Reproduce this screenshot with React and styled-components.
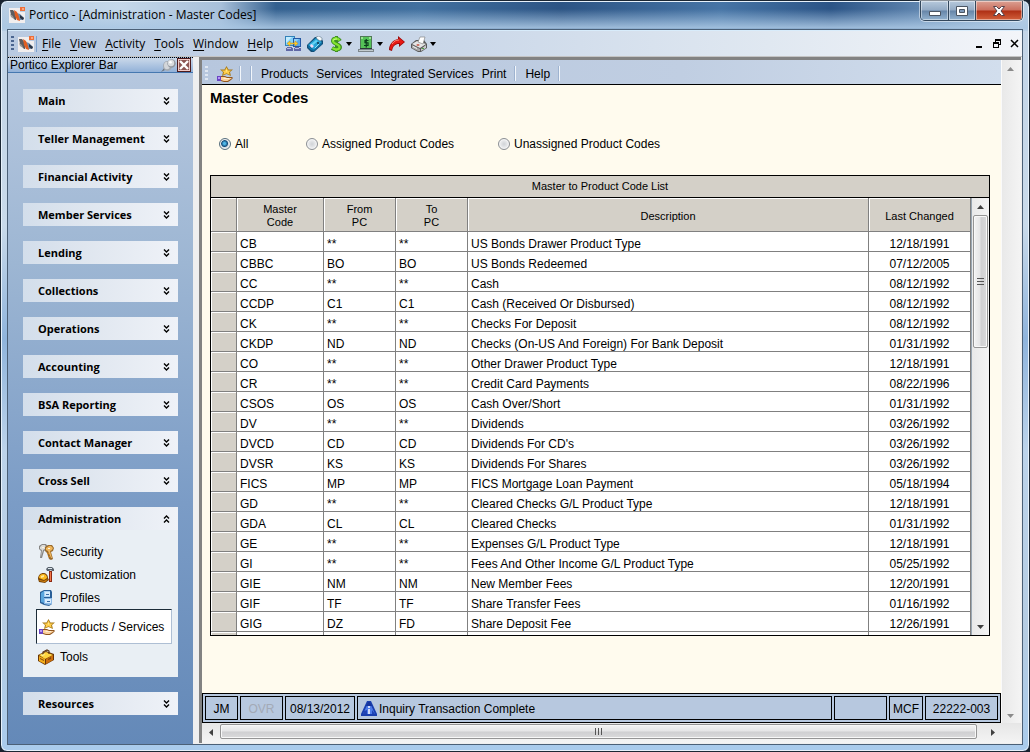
import React from 'react';
import styled, { createGlobalStyle, css } from 'styled-components';

const sans = '"Liberation Sans", Arial, sans-serif';
const ui = '"Open Sans", "Noto Sans", sans-serif';

const Global = createGlobalStyle`
  * { box-sizing: border-box; }
  html, body { margin: 0; background: #18222e; }
  body { font: 12px/16px ${sans}; color: #000; }
  button { font: inherit; color: inherit; background: none; border: 0; padding: 0; margin: 0; text-align: left; }
`;

/* ---------- window frame ---------- */

const Frame = styled.div`
  display: flex;
  flex-direction: column;
  min-height: 100vh;
  padding: 0 6px 6px;
  border: 1px solid #1b2734;
  border-radius: 7px;
  box-shadow: inset 0 0 0 1px #e6f1fb;
  background:
    linear-gradient(180deg, rgba(255, 255, 255, 0) 8px, rgba(170, 199, 227, 0.9) 27px, rgba(178, 205, 230, 0) 30px) 0 0 / 100% 30px no-repeat,
    linear-gradient(90deg, #b8cde2 0, #c5d8ea 120px, #a8c0da 220px, #33608f 275px, #41709f 420px, #2c5484 560px, #4674a5 720px, #2b5486 830px, #6b90b8 940px, #b9cfe4 1020px) 0 0 / 100% 30px no-repeat,
    linear-gradient(180deg, #c2d4e7, #c9daea 30%, #8fb4dc 45%, #bcd3ea 60%, #b5cce2 85%, #a9cbec);
`;

const TitleBar = styled.header`
  display: flex;
  height: 28px;
  align-items: flex-start;
  justify-content: space-between;
`;

const Title = styled.h1`
  display: flex;
  align-items: center;
  gap: 4px;
  margin: 0;
  padding: 5px 0 0 2px;
  font: 400 12px/18px ${ui};
`;

const Caption = styled.div`
  display: flex;
  border: 1px solid #33475c;
  border-top: 0;
  border-radius: 0 0 5px 5px;
  overflow: hidden;
  box-shadow: 0 0 0 1px rgba(255, 255, 255, 0.5);
`;

const CaptionButton = styled.button`
  display: flex;
  align-items: center;
  justify-content: center;
  width: ${p => (p.$danger ? 47 : 27)}px;
  height: 19px;
  border-left: ${p => (p.$first ? 0 : 1)}px solid #33475c;
  box-shadow: inset 0 0 0 1px rgba(255, 255, 255, 0.45);
  background: ${p => p.$danger
    ? 'linear-gradient(#dba093 0, #cb6f5e 48%, #ae2f14 52%, #d2603c 100%)'
    : 'linear-gradient(#b7c9dc 0, #93aac4 48%, #6685a8 52%, #93b2cf 100%)'};
`;

const Client = styled.div`
  display: flex;
  flex: 1;
  flex-direction: column;
  border: 1px solid #4b6077;
  background: #efefef;
`;

const MenuBar = styled.nav`
  display: flex;
  align-items: center;
  height: 27px;
  padding: 0 3px;
  border-top: 1px solid #d8ecfb;
  border-bottom: 1px solid #c4c4c4;
  font: 12px/18px ${ui};
  background: linear-gradient(90deg, #b9cae1, #cbd8e9 45%, #e0e8f1 75%, #f3f5f9);
`;

const Grip = styled.span`
  width: 3px;
  height: 15px;
  background: repeating-linear-gradient(180deg, ${p => p.$color} 0 2px, transparent 2px 4px);
`;

const MenuIcon = styled.span`
  display: flex;
  margin-left: 4px;
  padding-right: 2px;
  border-right: 1px solid #7ea3d0;
`;

const Menus = styled.div`
  display: flex;
  gap: 9px;
  margin-left: 5px;
`;

const MenuButton = styled.button`
  u { text-underline-offset: 2px; }
`;

const Tools = styled.div`
  display: flex;
  gap: 6px;
  margin-left: 12px;
`;

const ToolButton = styled.button`
  display: flex;
  align-items: center;
  gap: 3px;
`;

const MdiControls = styled.div`
  display: flex;
  gap: 8px;
  margin-left: auto;
`;

const MdiButton = styled.button`
  display: flex;
`;

const Body = styled.div`
  display: flex;
  flex: 1;
`;

/* ---------- explorer bar ---------- */

const Explorer = styled.aside`
  display: flex;
  flex: none;
  flex-direction: column;
  width: 185px;
  background: linear-gradient(180deg, #b8c9e0, #9db6d3 30%, #7b9cc6 65%, #6489b8);
`;

const ExplorerHead = styled.div`
  display: flex;
  align-items: center;
  height: 16px;
  padding-left: 2px;
  border-top: 1px dotted #000;
  border-bottom: 1px solid #4678b0;
  background: linear-gradient(180deg, #cbd9ea, #92b1d8);
`;

const ExplorerTitle = styled.h2`
  flex: 1;
  margin: 0;
  font: 400 12px/14px ${sans};
`;

const CloseBox = styled.button`
  display: flex;
  margin: 0 2px 0 1px;
`;

const Groups = styled.div`
  display: flex;
  flex-direction: column;
  gap: 15px;
  padding: 16px 15px 28px;
`;

const GroupHead = styled.button`
  display: flex;
  align-items: center;
  justify-content: space-between;
  width: 100%;
  height: 23px;
  padding: 0 8px 0 15px;
  font: 700 11px/16px ${ui};
  background: linear-gradient(90deg, #d3deeb, #dfe6ef 40%, #eff2f8);
`;

const GroupBody = styled.div`
  display: flex;
  flex-direction: column;
  padding: 10px 6px 9px 13px;
  background: #e9eff4;
`;

const GroupItem = styled.a`
  display: flex;
  align-items: center;
  gap: 6px;
  height: 23px;
  padding-left: 2px;
  color: #000;
  text-decoration: none;
  ${p => p.$active && css`
    height: 35px;
    margin-bottom: 1px;
    border: 1px solid #1c2c38;
    border-right-color: #aebfd4;
    border-bottom-color: #aebfd4;
    background: #fff;
  `}
`;

/* ---------- main pane ---------- */

const Pane = styled.main`
  display: flex;
  flex: 1;
  min-width: 0;
  flex-direction: column;
  margin: 0 1px 1px 6px;
  border-top: 3px solid #828282;
  border-left: 3px solid #828282;
  background: #efefef;
`;

const PaneRow = styled.div`
  display: flex;
  flex: 1;
`;

const PaneMain = styled.div`
  display: flex;
  flex: 1;
  min-width: 0;
  flex-direction: column;
  background: #fffbee;
`;

const Toolbar = styled.div`
  display: flex;
  align-items: center;
  height: 25px;
  padding: 3px 3px 0;
  border-bottom: 1px solid #000;
  background: linear-gradient(90deg, #b7c7de, #c0cee2 60%, #d2deed);
`;

const ToolbarIcon = styled.button`
  display: flex;
  margin: 0 6px 0 9px;
`;

const Divider = styled.span`
  width: 2px;
  height: 15px;
  margin-right: 9px;
  border-left: 1px solid #9eb3d0;
  border-right: 1px solid #f2f6fb;
`;

const ToolbarButton = styled.button`
  margin-right: 8px;
`;

const Content = styled.section`
  display: flex;
  flex: 1;
  flex-direction: column;
  padding: 3px 11px 40px 8px;
`;

const Heading = styled.h2`
  margin: 0;
  font: 700 15px/20px ${sans};
`;

const Filters = styled.fieldset`
  display: grid;
  grid-template-columns: 87px 192px auto;
  margin: 28px 0 19px;
  padding: 0 0 0 9px;
  border: 0;
  height: 20px;
`;

const Filter = styled.label`
  display: flex;
  align-items: center;
  gap: 4px;
`;

const Radio = styled.input`
  appearance: none;
  width: 12px;
  height: 12px;
  margin: 0;
  border: 1px solid #8b8f94;
  border-radius: 50%;
  background: radial-gradient(circle, #d0d3d7, #f1f2f3 70%);
  box-shadow: inset 0 0 0 1px #f4f4f4;
  &:checked {
    border-color: #58707f;
    background: radial-gradient(circle at 45% 45%, #4fb7e8 0 1px, #124c7c 3px, #d4dce2 4px);
  }
`;

const Grid = styled.div`
  border: 1px solid #000;
  background: #fff;
`;

const GridTitle = styled.div`
  height: 22px;
  border-bottom: 1px solid #000;
  font-size: 11px;
  line-height: 21px;
  text-align: center;
  background: #d4d0c8;
`;

const GridView = styled.div`
  display: flex;
`;

const Table = styled.table`
  flex: 1;
  width: 100%;
  table-layout: fixed;
  border-collapse: separate;
  border-spacing: 0;
`;

const Col = styled.col`
  width: ${p => (p.$w ? `${p.$w}px` : 'auto')};
`;

const Th = styled.th`
  height: 34px;
  padding: 3px 0 0;
  border-right: 1px solid #808080;
  border-bottom: 1px solid #808080;
  box-shadow: inset 1px 1px 0 #fff;
  font: 400 11px/13px ${sans};
  background: #d4d0c8;
`;

const Td = styled.td`
  height: ${p => (p.$tail ? 3 : 20)}px;
  padding: ${p => (p.$tail ? '0' : '5px 3px 0')};
  border-right: 1px solid #808080;
  border-bottom: ${p => (p.$tail ? 0 : 1)}px solid #808080;
  line-height: 14px;
  text-align: ${p => (p.$center ? 'center' : 'left')};
  white-space: nowrap;
  ${p => p.$head && css`
    box-shadow: inset 1px 1px 0 #fff;
    background: #d4d0c8;
  `}
`;

/* ---------- scroll bars ---------- */

const VTrack = styled.div`
  display: flex;
  flex: none;
  flex-direction: column;
  align-items: center;
  justify-content: ${p => (p.$spread ? 'space-between' : 'flex-start')};
  width: ${p => p.$w}px;
  padding: ${p => (p.$spread ? '7px 3px 5px 0' : '0 1px')};
  border-left: 1px solid ${p => (p.$spread ? '#fafafa' : '#9aa7b3')};
  background: linear-gradient(90deg, #e9e9e9, #f4f4f4);
`;

const ScrollButton = styled.button`
  display: flex;
  align-items: center;
  justify-content: center;
  width: 17px;
  height: 17px;
`;

const VThumb = styled.div`
  display: flex;
  align-items: center;
  justify-content: center;
  width: 15px;
  height: 133px;
  margin-bottom: auto;
  border: 1px solid #959595;
  border-radius: 2px;
  box-shadow: inset 0 0 0 1px #f8f8f8;
  background: linear-gradient(90deg, #f3f3f3, #e5e5e6 48%, #cfcfd1 52%, #dadadb);
`;

const HTrack = styled.div`
  display: flex;
  align-items: flex-start;
  height: 20px;
  padding: 1px 20px 0 0;
  background: linear-gradient(180deg, #e6e6e6, #f4f4f4);
`;

const HThumb = styled.div`
  display: flex;
  flex: 1;
  align-items: center;
  justify-content: center;
  height: 15px;
  margin: 0 7px 0 1px;
  border: 1px solid #959595;
  border-radius: 2px;
  box-shadow: inset 0 0 0 1px #f8f8f8;
  background: linear-gradient(180deg, #f3f3f3, #e5e5e6 48%, #cfcfd1 52%, #dadadb);
`;

/* ---------- status bar ---------- */

const StatusBar = styled.footer`
  display: flex;
  gap: 2px;
  height: 30px;
  padding: 2px;
  border: 1px solid #000;
  background: #b7c8df;
`;

const StatusCell = styled.div`
  display: flex;
  flex: ${p => (p.$w ? 'none' : 1)};
  align-items: center;
  justify-content: ${p => (p.$w ? 'center' : 'flex-start')};
  gap: 2px;
  width: ${p => (p.$w ? `${p.$w}px` : 'auto')};
  padding: 2px 3px 0;
  border: 1px solid #000;
  white-space: nowrap;
  color: ${p => (p.$off ? '#a3aab6' : '#000')};
`;

/* ---------- icons ---------- */

const Svg = ({ w = 16, h = 16, children }) => (
  <svg width={w} height={h} viewBox={`0 0 ${w} ${h}`} aria-hidden="true">{children}</svg>
);

const LogoIcon = () => (
  <Svg>
    <path d="M0 1h11v4h5v11H0z" fill="#f1eeee" />
    <path d="M1 3h3l3 4v6H6L2 8z" fill="#5d5c60" />
    <path d="M1 7l3 2 1 3-3-2z" fill="#9a9694" />
    <path d="M8 6l3 1 4 4-1 2H9z" fill="#6f8bab" />
    <path d="M11 8l4 3-1 2-3-2z" fill="#2a3342" />
    <path d="M5 3l3 2 2 5 1 4-3-1-2-4z" fill="#e35d20" />
    <path d="M11 0h5v4h-5z" fill="#ee6f38" />
    <path d="M13 1h2v2h-2z" fill="#ffa57c" />
  </Svg>
);

const NetworkIcon = () => (
  <Svg>
    <path d="M0 0h10v10H0z" fill="#3382b8" />
    <path d="M1 1h8v8H1z" fill="#82d2fa" />
    <path d="M1 1h6L1 7z" fill="#c3edff" />
    <path d="M8 2h8v9H8z" fill="#2458a4" />
    <path d="M9 3h6v7H9z" fill="#5aa9ea" />
    <path d="M9 3h5L9 8z" fill="#8fd2f8" />
    <path d="M2 11h5v1h1v3H1v-3h1zM10 11h4v1h2v3H9v-3h1z" fill="#5f68a5" />
    <path d="M2 12h4v1H2zM10 12h4v1h-4z" fill="#b4bae2" />
    <path d="M2 7.500L5 5v2h5V5l3 2.500-3 2.500V8H5v2z" fill="#ffcf2b" stroke="#c98d10" strokeWidth=".5" />
  </Svg>
);

const CardIcon = () => (
  <Svg>
    <path d="M0 9l8-8h5l3 4v3l-9 8H4l-4-4z" fill="#124e76" />
    <path d="M1 9l8-7 6 4-8 8z" fill="#26a2d5" />
    <path d="M1 10l6 4 8-7v1l-8 7-3-1-3-3z" fill="#0b79b4" />
    <path d="M3 9l6-5 2 1-6 5z" fill="#65d3f4" />
    <path d="M4 8l3 2-2 2-2-2z" fill="#f2d9f7" />
    <path d="M9 1l3-1 3 2v2l-2 1-3-2z" fill="#f3f8fa" stroke="#486579" strokeWidth=".5" />
    <path d="M10 6h2v2h-2z" fill="#174e6f" />
    <path d="M12 8l-4 4" stroke="#8ee2f8" />
  </Svg>
);

const DollarIcon = () => (
  <Svg w={14}>
    <path d="M11 5C9 2 4 2 4 5s7 3 7 6-5 3-8 1" fill="none" stroke="#3f8f24" strokeWidth="4" />
    <path d="M7.500 0v16" stroke="#3f8f24" strokeWidth="3" />
    <path d="M10.500 4.500C9 2 4 2 4 5s6.500 3 6.500 6-4.500 3-7 1" fill="none" stroke="#86e62e" strokeWidth="2.200" />
    <path d="M7 1v2M7 13v2" stroke="#86e62e" strokeWidth="1.500" />
    <path d="M4 4.500C5 3 7 3 8 3" fill="none" stroke="#ccff90" />
  </Svg>
);

const CashIcon = () => (
  <Svg>
    <path d="M2 0h12v13H2z" fill="#4f7a55" />
    <path d="M3 1h10v12H3z" fill="#55c257" />
    <path d="M3 1h2v2H3zM11 1h2v2h-2z" fill="#9be491" />
    <path d="M10.500 4.500H7v2.250h3V9.500H6M8.250 3v8.500" fill="none" stroke="#0c3f1c" strokeWidth="1.200" />
    <path d="M0 13h2v-1h12v1h2v3H0z" fill="#7d868b" />
    <path d="M1 14h14v1H1z" fill="#c3ccd0" />
    <path d="M2 12h12v1H2z" fill="#2b3a36" />
  </Svg>
);

const ArrowIcon = () => (
  <Svg>
    <path d="M9 0l7 6-6 5V8C6 8 4 10 3 15L0 14C0 8 4 4 9 3z" fill="#9d0b0b" />
    <path d="M10 2l5 4-4 3V7C6 7 4 9 2.500 14L1 13C1 8 5 4 10 4z" fill="#e81914" />
    <path d="M3 8c2-3 4-4 7-4" fill="none" stroke="#ff8a7c" />
  </Svg>
);

const PrinterIcon = () => (
  <Svg>
    <path d="M0 8l5-4h8l3 4v4l-6 4H7l-7-4z" fill="#5a5a5a" />
    <path d="M1 8l5-3 9 3-6 4z" fill="#e6e6e6" />
    <path d="M1 9l8 4v2H7l-6-3z" fill="#a9a9a9" />
    <path d="M10 13l5-4v3l-5 3z" fill="#cdcdcd" />
    <path d="M7 6l2-5h5l-2 7z" fill="#fff" stroke="#777" strokeWidth=".6" />
    <path d="M5 9l2-1 2 1-2 1z" fill="#c2513f" />
    <path d="M11 12h2v1h-2z" fill="#48a642" />
    <path d="M2 10l4 2v1l-4-2z" fill="#f4f4f4" />
  </Svg>
);

const StarHandIcon = () => (
  <Svg>
    <path d="M9.500 0l2 3.500H16L13 6l1 4-4.500-2L5 10l1-4-3-2.500h4.500z" fill="#a87a1c" />
    <path d="M9.500 1.500L11 4.500h3L12 6.300l.7 2.500-3.200-1.500-3.200 1.500L7 6.300 5 4.500h3z" fill="#ffce4b" />
    <path d="M9.500 3l.7 2.500H8.800z" fill="#fff0a0" />
    <path d="M0 10h4v5H0z" fill="#6a45c4" />
    <path d="M1 11h2v2H1z" fill="#b797f4" />
    <path d="M4 10h4l2 1h5l1 1-2 2-3 2H7l-3-1z" fill="#8f551d" />
    <path d="M4 11h4l2 1h5l-2 1.500-2.500 1.500H7l-3-1z" fill="#fbd09a" />
    <path d="M6 12h6v1H7z" fill="#ffedd2" />
  </Svg>
);

const KeysIcon = () => (
  <Svg>
    <path d="M1 2l3-2h4l2 3-2 3-2 1-2 7H2l1-7-2-2z" fill="#868583" />
    <path d="M2 3l2-2h3l1 2-1 2-2 1-2 7 1-7-2-1z" fill="#dddcd8" />
    <path d="M7 3l3-2h4l2 3-1 3-2 1 2 7-2 1-2-1-2-6-2-2z" fill="#9a6a2a" />
    <path d="M8 4l3-2h2l2 2-1 2-2 1 2 7h-1l-3-7-2-1z" fill="#f0b75c" />
    <path d="M10 4h2v1h-2zM4 3h2v1H4z" fill="#fff6dc" />
    <path d="M9 9h2v1H9zM10 12h2v1h-2z" fill="#c88226" />
  </Svg>
);

const HelmetIcon = () => (
  <Svg>
    <path d="M0 12c0-4 3-6 5-6 3 0 5 2 5 5l1 2-4 3-6-1z" fill="#7a4608" />
    <path d="M1 11c0-3 2-4 4-4 3 0 4 2 4 4l-3 2z" fill="#fcb91c" />
    <path d="M3 9l3-1v2l-3 1z" fill="#ffe694" />
    <path d="M1 13l5 1 4-2-3 3-5-1z" fill="#e58b0c" />
    <path d="M8 2l2-2h4l2 2v2h-2l-1-1-2 1H9z" fill="#59636d" />
    <path d="M10 1h4v1h-4z" fill="#dfe8ed" />
    <path d="M11 4h3v11h-3z" fill="#8d2811" />
    <path d="M12 5h1v9h-1z" fill="#f5794a" />
  </Svg>
);

const CabinetIcon = () => (
  <Svg>
    <path d="M2 2l4-2h7l1 2v12l-3 2-5-1-4-2z" fill="#2a5f97" />
    <path d="M3 3l3-2v12l-3-1z" fill="#5aa6de" />
    <path d="M6 1h6v6H6z" fill="#a9d0f3" />
    <path d="M6 8h8v6l-3 1-5-1z" fill="#8dbbe8" />
    <path d="M7 2h5v4H7zM7 9h6v4H7z" fill="#d8ecfc" />
    <path d="M8 4h3v1H8zM9 11h3v1H9z" fill="#3b6aa4" />
  </Svg>
);

const ToolboxIcon = () => (
  <Svg>
    <path d="M0 6l8-4 8 3v6l-9 5-7-4z" fill="#6a3706" />
    <path d="M1 6l7-3 7 3-8 4z" fill="#ffd540" />
    <path d="M1 7l6 3v5l-6-3z" fill="#f5ae1a" />
    <path d="M8 10l7-4v5l-7 4z" fill="#cc6f0c" />
    <path d="M5 6V3l4-2 2 1v3" fill="none" stroke="#573010" strokeWidth="1.200" />
    <path d="M2 9l4 2v1l-4-2zM10 10l3-2v2l-3 1z" fill="#7f470f" />
    <path d="M3 6l3-1 1 1-3 1z" fill="#fff3a0" />
  </Svg>
);

const InfoIcon = () => (
  <Svg>
    <path d="M6 0h4l6 13v2H0v-2z" fill="#1a3faf" />
    <path d="M7 2h2l5 11H2z" fill="#4e7ce8" />
    <path d="M7 1h2l2 4H5z" fill="#17349b" />
    <path d="M3 10l3-1v4H2zM11 9l3 4h-3z" fill="#2144b5" />
    <path d="M7 5h2v2H7zM7 8h2v5H7z" fill="#cfdafa" />
  </Svg>
);

const PinIcon = () => (
  <Svg w={15} h={13}>
    <path d="M0 13l4-5 2 2z" fill="#6b727b" />
    <ellipse cx="6.500" cy="7" rx="4.500" ry="5" fill="#a4aab1" />
    <ellipse cx="6" cy="6.500" rx="3" ry="3.800" fill="#d3d6da" />
    <circle cx="10.500" cy="4.500" r="4.200" fill="#9298a0" />
    <circle cx="10" cy="4" r="3.200" fill="#d9dcdf" />
    <circle cx="9.500" cy="3.200" r="1.300" fill="#fff" />
  </Svg>
);

const CloseBoxIcon = () => (
  <Svg w={14} h={14}>
    <path d="M0 0h14v14H0z" fill="#4b1a1c" />
    <path d="M1 1h12v12H1z" fill="#f0c9c6" />
    <path d="M2 2h10v10H2z" fill="#8c5553" />
    <path d="M3 3l8 8M11 3l-8 8" stroke="#fff" strokeWidth="2.400" />
  </Svg>
);

const Chevrons = ({ up }) => (
  <Svg w={7} h={8}>
    <path
      d={up ? 'M1 3.500L3.500 1 6 3.500M1 7.500L3.500 5 6 7.500' : 'M1 .5L3.500 3 6 .5M1 4.500L3.500 7 6 4.500'}
      fill="none" stroke="#000" strokeWidth="1.400"
    />
  </Svg>
);

const arrows = {
  down: [7, 4, 'M0 0h7L3.500 4z'],
  up: [7, 4, 'M0 4h7L3.500 0z'],
  left: [4, 7, 'M4 0v7L0 3.500z'],
  right: [4, 7, 'M0 0v7l4-3.500z'],
};

const Arrow = ({ dir, color = '#404040' }) => {
  const [w, h, d] = arrows[dir];
  return <Svg w={w} h={h}><path d={d} fill={color} /></Svg>;
};

const Caret = () => <Svg w={6} h={4}><path d="M0 0h6L3 4z" fill="#000" /></Svg>;

const ThumbLines = ({ vertical }) => (
  <Svg w={9} h={9}>
    <path d={vertical ? 'M1.500 1v7M4.500 1v7M7.500 1v7' : 'M1 1.500h7M1 4.500h7M1 7.500h7'} stroke="#555" />
  </Svg>
);

/* ---------- data ---------- */

const groupsBefore = ['Main', 'Teller Management', 'Financial Activity', 'Member Services', 'Lending',
  'Collections', 'Operations', 'Accounting', 'BSA Reporting', 'Contact Manager', 'Cross Sell'];

const adminItems = [
  ['Security', KeysIcon],
  ['Customization', HelmetIcon],
  ['Profiles', CabinetIcon],
  ['Products / Services', StarHandIcon, true],
  ['Tools', ToolboxIcon],
];

const menus = ['File', 'View', 'Activity', 'Tools', 'Window', 'Help'];

const tools = [
  ['Connection', NetworkIcon],
  ['Card', CardIcon],
  ['Money', DollarIcon, true],
  ['Cash', CashIcon, true],
  ['Forward', ArrowIcon],
  ['Printer', PrinterIcon, true],
];

const rows = [
  ['CB', '**', '**', 'US Bonds Drawer Product Type', '12/18/1991'],
  ['CBBC', 'BO', 'BO', 'US Bonds Redeemed', '07/12/2005'],
  ['CC', '**', '**', 'Cash', '08/12/1992'],
  ['CCDP', 'C1', 'C1', 'Cash (Received Or Disbursed)', '08/12/1992'],
  ['CK', '**', '**', 'Checks For Deposit', '08/12/1992'],
  ['CKDP', 'ND', 'ND', 'Checks (On-US And Foreign) For Bank Deposit', '01/31/1992'],
  ['CO', '**', '**', 'Other Drawer Product Type', '12/18/1991'],
  ['CR', '**', '**', 'Credit Card Payments', '08/22/1996'],
  ['CSOS', 'OS', 'OS', 'Cash Over/Short', '01/31/1992'],
  ['DV', '**', '**', 'Dividends', '03/26/1992'],
  ['DVCD', 'CD', 'CD', "Dividends For CD's", '03/26/1992'],
  ['DVSR', 'KS', 'KS', 'Dividends For Shares', '03/26/1992'],
  ['FICS', 'MP', 'MP', 'FICS Mortgage Loan Payment', '05/18/1994'],
  ['GD', '**', '**', 'Cleared Checks G/L Product Type', '12/18/1991'],
  ['GDA', 'CL', 'CL', 'Cleared Checks', '01/31/1992'],
  ['GE', '**', '**', 'Expenses G/L Product Type', '12/18/1991'],
  ['GI', '**', '**', 'Fees And Other Income G/L Product Type', '05/25/1992'],
  ['GIE', 'NM', 'NM', 'New Member Fees', '12/20/1991'],
  ['GIF', 'TF', 'TF', 'Share Transfer Fees', '01/16/1992'],
  ['GIG', 'DZ', 'FD', 'Share Deposit Fee', '12/26/1991'],
];

/* ---------- page ---------- */

const Group = ({ name, open, children }) => (
  <div>
    <GroupHead aria-expanded={!!open}>{name}<Chevrons up={open} /></GroupHead>
    {children}
  </div>
);

export default function App() {
  return (
    <>
      <Global />
      <Frame>
        <TitleBar>
          <Title><LogoIcon />Portico - [Administration - Master Codes]</Title>
          <Caption>
            <CaptionButton $first aria-label="Minimize">
              <Svg w={12} h={12}><path d="M.5 6.500h11v4H.5z" fill="#fff" stroke="#4b5563" /></Svg>
            </CaptionButton>
            <CaptionButton aria-label="Maximize">
              <Svg w={12} h={10}>
                <path d="M.5.5h11v9H.5z" fill="#fff" stroke="#4b5563" />
                <path d="M3.500 3.500h5v3h-5z" fill="#7e9abb" stroke="#4b5563" />
              </Svg>
            </CaptionButton>
            <CaptionButton $danger aria-label="Close">
              <Svg w={12} h={10}>
                <path d="M.5.5h3L6 3l2.500-2.500h3L8 5l3.500 4.500h-3L6 7 3.500 9.500h-3L4 5z" fill="#fff" stroke="#53404a" />
              </Svg>
            </CaptionButton>
          </Caption>
        </TitleBar>
        <Client>
          <MenuBar>
            <Grip $color="#4a6590" />
            <MenuIcon><LogoIcon /></MenuIcon>
            <Menus>
              {menus.map(m => <MenuButton key={m}><u>{m[0]}</u>{m.slice(1)}</MenuButton>)}
            </Menus>
            <Tools>
              {tools.map(([name, Icon, drop]) => (
                <ToolButton key={name} aria-label={name}><Icon />{drop && <Caret />}</ToolButton>
              ))}
            </Tools>
            <MdiControls>
              <MdiButton aria-label="Minimize document">
                <Svg w={9} h={9}><path d="M1 7h6v2H1z" /></Svg>
              </MdiButton>
              <MdiButton aria-label="Restore document">
                <Svg w={10} h={9}>
                  <path d="M3 0h6v6H7V5h1V2H4v1H3z" />
                  <path d="M1 3h6v6H1zM2 5v3h4V5z" fillRule="evenodd" />
                </Svg>
              </MdiButton>
              <MdiButton aria-label="Close document">
                <Svg w={9} h={9}><path d="M1 1l7 7M8 1L1 8" stroke="#000" strokeWidth="1.500" /></Svg>
              </MdiButton>
            </MdiControls>
          </MenuBar>
          <Body>
            <Explorer>
              <ExplorerHead>
                <ExplorerTitle>Portico Explorer Bar</ExplorerTitle>
                <PinIcon />
                <CloseBox aria-label="Close explorer bar"><CloseBoxIcon /></CloseBox>
              </ExplorerHead>
              <Groups>
                {groupsBefore.map(g => <Group key={g} name={g} />)}
                <Group name="Administration" open>
                  <GroupBody>
                    {adminItems.map(([name, Icon, active]) => (
                      <GroupItem key={name} href="#" $active={active}><Icon />{name}</GroupItem>
                    ))}
                  </GroupBody>
                </Group>
                <Group name="Resources" />
              </Groups>
            </Explorer>
            <Pane>
              <PaneRow>
                <PaneMain>
                  <Toolbar>
                    <Grip $color="#dfe7f2" />
                    <ToolbarIcon aria-label="Products and services"><StarHandIcon /></ToolbarIcon>
                    <Divider />
                    <Divider />
                    <ToolbarButton>Products</ToolbarButton>
                    <ToolbarButton>Services</ToolbarButton>
                    <ToolbarButton>Integrated Services</ToolbarButton>
                    <ToolbarButton>Print</ToolbarButton>
                    <Divider />
                    <ToolbarButton>Help</ToolbarButton>
                    <Divider />
                  </Toolbar>
                  <Content>
                    <Heading>Master Codes</Heading>
                    <Filters>
                      <Filter><Radio type="radio" name="codes" defaultChecked />All</Filter>
                      <Filter><Radio type="radio" name="codes" />Assigned Product Codes</Filter>
                      <Filter><Radio type="radio" name="codes" />Unassigned Product Codes</Filter>
                    </Filters>
                    <Grid>
                      <GridTitle>Master to Product Code List</GridTitle>
                      <GridView>
                        <Table>
                          <colgroup>
                            <Col $w={26} /><Col $w={87} /><Col $w={72} /><Col $w={72} /><Col /><Col $w={102} />
                          </colgroup>
                          <thead>
                            <tr>
                              <Th />
                              <Th>Master<br />Code</Th>
                              <Th>From<br />PC</Th>
                              <Th>To<br />PC</Th>
                              <Th>Description</Th>
                              <Th>Last Changed</Th>
                            </tr>
                          </thead>
                          <tbody>
                            {rows.map(([code, from, to, text, date]) => (
                              <tr key={code}>
                                <Td $head />
                                <Td>{code}</Td>
                                <Td>{from}</Td>
                                <Td>{to}</Td>
                                <Td>{text}</Td>
                                <Td $center>{date}</Td>
                              </tr>
                            ))}
                            <tr>
                              <Td $tail $head /><Td $tail /><Td $tail /><Td $tail /><Td $tail /><Td $tail />
                            </tr>
                          </tbody>
                        </Table>
                        <VTrack $w={18}>
                          <ScrollButton aria-label="Scroll list up"><Arrow dir="up" /></ScrollButton>
                          <VThumb><ThumbLines /></VThumb>
                          <ScrollButton aria-label="Scroll list down"><Arrow dir="down" /></ScrollButton>
                        </VTrack>
                      </GridView>
                    </Grid>
                  </Content>
                  <StatusBar>
                    <StatusCell $w={33}>JM</StatusCell>
                    <StatusCell $w={43} $off>OVR</StatusCell>
                    <StatusCell $w={70}>08/13/2012</StatusCell>
                    <StatusCell><InfoIcon />Inquiry Transaction Complete</StatusCell>
                    <StatusCell $w={53} />
                    <StatusCell $w={34}>MCF</StatusCell>
                    <StatusCell $w={73}>22222-003</StatusCell>
                  </StatusBar>
                </PaneMain>
                <VTrack $w={20} $spread>
                  <Arrow dir="up" color="#8a8a8a" />
                  <Arrow dir="down" color="#8a8a8a" />
                </VTrack>
              </PaneRow>
              <HTrack>
                <ScrollButton aria-label="Scroll left"><Arrow dir="left" /></ScrollButton>
                <HThumb><ThumbLines vertical /></HThumb>
                <ScrollButton aria-label="Scroll right"><Arrow dir="right" /></ScrollButton>
              </HTrack>
            </Pane>
          </Body>
        </Client>
      </Frame>
    </>
  );
}
